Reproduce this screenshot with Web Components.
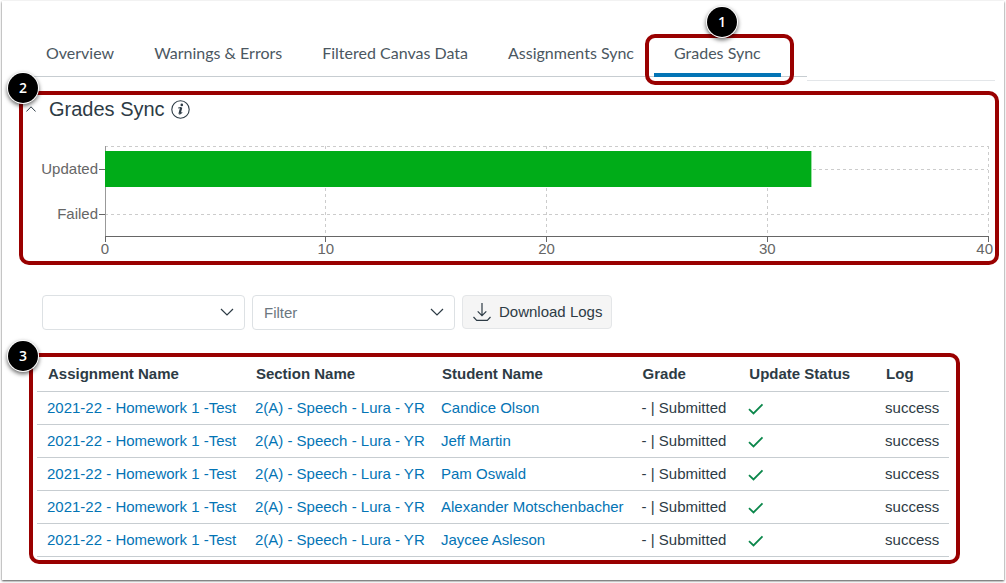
<!DOCTYPE html>
<html lang="en">
<head>
<meta charset="utf-8">
<title>Grades Sync</title>
<style>
  body {
    margin: 0;
    padding: 1px 2px 3px;
    background: #fff;
    color: #2d3b45;
    font: 15px/20px "Liberation Sans", Arial, sans-serif;
  }
</style>
</head>
<body>
<sync-page></sync-page>

<script>
class StepCallout extends HTMLElement {
  connectedCallback() {
    const shadowRoot = this.attachShadow({mode: 'open'});
    const css = `
    <style>
      :host {
        display: block;
        position: relative;
        box-sizing: border-box;
        border: 4px solid #900;
        border-radius: 10px;
      }
      .badge {
        position: absolute;
        left: var(--badge-x, -15px);
        top: var(--badge-y, -22px);
        width: 30px;
        height: 30px;
        border-radius: 50%;
        background: #000;
        color: #fff;
        font: 600 14px/30px "Open Sans", sans-serif;
        text-align: center;
        box-shadow: 0 0 0 1px #fff, 0 2px 4px 1px rgba(0, 0, 0, .6);
      }
      /* floating: the frame is drawn over its content and takes no space */
      :host([floating]) {
        border: 0;
      }
      .frame {
        display: none;
      }
      :host([floating]) .frame {
        display: block;
        position: absolute;
        inset: 2px -13px -8px -9px;
        border: 4px solid #900;
        border-radius: 10px;
        pointer-events: none;
      }
    </style>
    `;
    const html = `
    <slot></slot>
    <div class="frame"></div>
    <span class="badge">${this.getAttribute('number')}</span>
    `;
    shadowRoot.innerHTML = css + html;
  }
}
customElements.define('step-callout', StepCallout);


class TabItem extends HTMLElement {
  connectedCallback() {
    const shadowRoot = this.attachShadow({mode: 'open'});
    const current = this.hasAttribute('selected') ? 'aria-current="page"' : '';
    shadowRoot.innerHTML = `
    <style>
      :host {
        display: block;
      }
      button {
        display: block;
        height: 45px;
        padding: 0 20px;
        border: 0;
        border-bottom: 4px solid transparent;
        background: none;
        color: #4b5761;
        font: 16px/20px Lato, sans-serif;
        white-space: nowrap;
        cursor: pointer;
      }
      button[aria-current] {
        border-bottom-color: #0374b5;
      }
    </style>
    <button type="button" ${current}><slot></slot></button>
    `;
  }
}
customElements.define('tab-item', TabItem);


class TabBar extends HTMLElement {
  connectedCallback() {
    const shadowRoot = this.attachShadow({mode: 'open'});
    shadowRoot.innerHTML = `
    <style>
      :host {
        display: flex;
        align-items: flex-start;
      }
      nav {
        display: flex;
        padding-right: 26px;
        box-shadow: inset 0 -1px #c7cdd1;
      }
      .rest {
        flex: 1;
        height: 48px;
        border-bottom: 1px solid #e3e6e9;
      }
    </style>
    <nav><slot></slot></nav>
    <div class="rest"></div>
    `;
  }
}
customElements.define('tab-bar', TabBar);


class SectionHeading extends HTMLElement {
  connectedCallback() {
    const shadowRoot = this.attachShadow({mode: 'open'});
    shadowRoot.innerHTML = `
    <style>
      :host {
        display: flex;
        align-items: center;
        height: 28px;
      }
      button {
        display: flex;
        padding: 0;
        border: 0;
        background: none;
        color: inherit;
        cursor: pointer;
      }
      .toggle {
        margin: 0 13px 0 3px;
      }
      h2 {
        margin: 0 6px 0 0;
        font-size: 20px;
        font-weight: 400;
        line-height: 24px;
      }
    </style>
    <button class="toggle" type="button" aria-label="Collapse">
      <svg width="10" height="6" viewBox="0 0 10 6" fill="none" stroke="#2d3b45"><path d="M0.4 5.5 5 0.8 9.6 5.5"/></svg>
    </button>
    <h2><slot></slot></h2>
    <button type="button" aria-label="Information">
      <svg width="19" height="19" viewBox="0 0 19 19" fill="none" stroke="#2d3b45">
        <circle cx="9.500" cy="9.500" r="8.700" stroke-width="1.100"/>
        <circle cx="10.800" cy="4.900" r="1.300" fill="#2d3b45" stroke="none"/>
        <path d="M7.200 8 10.300 7.500" stroke-width="1.100"/>
        <path d="M10.200 7.500 8.600 13.500" stroke-width="2.200"/>
        <path d="M7.900 13.300Q8.300 15 11.200 12.400" stroke-width="1.100"/>
      </svg>
    </button>
    `;
  }
}
customElements.define('section-heading', SectionHeading);


class BarChart extends HTMLElement {
  connectedCallback() {
    const shadowRoot = this.attachShadow({mode: 'open'});
    const max = Number(this.getAttribute('max'));
    const rows = JSON.parse(this.getAttribute('rows'));
    const band = 45;
    const bottom = band * rows.length;

    let grid = '<line x2="100%" y1="0" y2="0"/>';
    let axis = '';
    for (let i = 0; i <= 4; i++) {
      const x = i * 25 + '%';
      const place = i == 4 ? 'text-anchor="end" dx="5"' : 'text-anchor="middle"';
      if (i > 0) grid += `<line x1="${x}" x2="${x}" y1="0" y2="${bottom}"/>`;
      axis += `<line x1="${x}" x2="${x}" y1="${bottom}" y2="${bottom + 6}"/>`;
      axis += `<text x="${x}" y="${bottom + 18}" ${place}>${max / 4 * i}</text>`;
    }
    let bars = '';
    rows.forEach(([name, value], i) => {
      const y = i * band + 23;
      grid += `<line x2="100%" y1="${y}" y2="${y}"/>`;
      axis += `<line x1="-6" x2="0" y1="${y}" y2="${y}"/>`;
      bars += `<rect y="${y - 18}" width="${value / max * 100}%" height="36"/>`;
    });

    shadowRoot.innerHTML = `
    <style>
      :host {
        display: flex;
        color: #666;
      }
      .names {
        width: 75px;
        margin-right: 7px;
        text-align: right;
      }
      .names div {
        line-height: ${band}px;
      }
      svg {
        flex: 1;
        min-width: 0;
        height: 115px;
        overflow: visible;
      }
      line {
        stroke: #666;
        shape-rendering: crispEdges;
      }
      .grid line {
        stroke: #ccc;
        stroke-dasharray: 3 3;
      }
      .y {
        stroke: #999;
      }
      rect {
        fill: #00ac18;
      }
      text {
        fill: #666;
      }
    </style>
    <div class="names">${rows.map(([name]) => `<div>${name}</div>`).join('')}</div>
    <svg>
      <g class="grid">${grid}</g>
      <line class="y" y2="${bottom}"/>
      <line x2="100%" y1="${bottom}" y2="${bottom}"/>
      ${axis}
      ${bars}
    </svg>
    `;
  }
}
customElements.define('bar-chart', BarChart);


class FilterSelect extends HTMLElement {
  connectedCallback() {
    const shadowRoot = this.attachShadow({mode: 'open'});
    shadowRoot.innerHTML = `
    <style>
      :host {
        display: block;
        position: relative;
        flex: 0 1 203px;
      }
      select {
        appearance: none;
        box-sizing: border-box;
        width: 100%;
        height: 35px;
        padding: 0 32px 0 11px;
        border: 1px solid #dde1e4;
        border-radius: 4px;
        background: #fff;
        color: #6b7780;
        font: inherit;
      }
      svg {
        position: absolute;
        right: 11px;
        top: 13px;
        pointer-events: none;
      }
    </style>
    <select aria-label="${this.getAttribute('label')}">
      <option>${this.getAttribute('value') || ''}</option>
    </select>
    <svg width="14" height="8" viewBox="0 0 14 8" fill="none" stroke="#2d3b45" stroke-width="1.200"><path d="M1 1 7 7 13 1"/></svg>
    `;
  }
}
customElements.define('filter-select', FilterSelect);


class DownloadButton extends HTMLElement {
  connectedCallback() {
    const shadowRoot = this.attachShadow({mode: 'open'});
    shadowRoot.innerHTML = `
    <style>
      :host {
        display: block;
      }
      button {
        display: flex;
        align-items: center;
        gap: 8px;
        height: 34px;
        padding: 0 9px 0 10px;
        border: 1px solid #e4e6e8;
        border-radius: 4px;
        background: #f5f5f5;
        color: #2d3b45;
        font: inherit;
        white-space: nowrap;
        cursor: pointer;
      }
    </style>
    <button type="button">
      <svg width="18" height="18" viewBox="0 0 18 18" fill="none" stroke="#2d3b45" stroke-width="1.200"><path d="M9 0V12.500M4.700 8.300 9 12.600 13.300 8.300M0.500 14 3.700 17.300H14.300L17.500 14"/></svg>
      <slot></slot>
    </button>
    `;
  }
}
customElements.define('download-button', DownloadButton);


class GradesTable extends HTMLElement {
  connectedCallback() {
    const shadowRoot = this.attachShadow({mode: 'open'});
    const students = ['Candice Olson', 'Jeff Martin', 'Pam Oswald', 'Alexander Motschenbacher', 'Jaycee Asleson'];
    const rows = students.map(student => `
      <tr>
        <td><a href="#">2021-22 - Homework 1 -Test</a></td>
        <td><a href="#">2(A) - Speech - Lura - YR</a></td>
        <td><a href="#">${student}</a></td>
        <td>- | Submitted</td>
        <td><svg width="16" height="12" viewBox="0 0 16 12" fill="none" stroke="#0b874b" stroke-width="1.800" role="img" aria-label="Updated"><path d="M1 6.200 5.500 10.500 14.500 1.300"/></svg></td>
        <td>success</td>
      </tr>`).join('');

    shadowRoot.innerHTML = `
    <style>
      :host {
        display: block;
      }
      table {
        width: 100%;
        table-layout: fixed;
        border-collapse: separate;
        border-spacing: 0;
      }
      th, td {
        box-sizing: border-box;
        height: 33px;
        padding: 0 0 0 10px;
        border-bottom: 1px solid #c7cdd1;
        text-align: left;
        white-space: nowrap;
      }
      th {
        height: 35px;
        padding-left: 11px;
      }
      th:nth-child(1) { width: 22.8%; }
      th:nth-child(2) { width: 20.4%; }
      th:nth-child(3) { width: 22%; }
      th:nth-child(4) { width: 11.7%; }
      th:nth-child(5) { width: 15%; }
      a {
        color: #0374b5;
        text-decoration: none;
      }
      svg {
        display: block;
        margin-top: 2px;
      }
    </style>
    <table>
      <thead>
        <tr>
          <th>Assignment Name</th>
          <th>Section Name</th>
          <th>Student Name</th>
          <th>Grade</th>
          <th>Update Status</th>
          <th>Log</th>
        </tr>
      </thead>
      <tbody>${rows}</tbody>
    </table>
    `;
  }
}
customElements.define('grades-table', GradesTable);


class SyncPage extends HTMLElement {
  connectedCallback() {
    const shadowRoot = this.attachShadow({mode: 'open'});
    shadowRoot.innerHTML = `
    <style>
      :host {
        display: block;
        box-sizing: border-box;
        min-height: calc(100vh - 4px);
        padding-top: 31px;
        background: #fff;
        box-shadow: 0 1px 2px rgba(0, 0, 0, .7);
      }
      tab-bar {
        margin: 0 9px 0 24px;
      }
      .tab-callout {
        --badge-x: 53px;
        --badge-y: -25px;
      }
      .chart {
        margin: 10px 5px 0 17px;
      }
      .chart bar-chart {
        margin: 23px 7px 0 0;
      }
      .filters {
        display: flex;
        gap: 7px;
        margin: 30px 40px 0;
      }
      .table {
        --badge-x: -25px;
        --badge-y: -16px;
        margin: 23px 44px 0 27px;
        padding: 0 7px 3px 4px;
      }
    </style>
    <tab-bar>
      <tab-item>Overview</tab-item>
      <tab-item>Warnings &amp; Errors</tab-item>
      <tab-item>Filtered Canvas Data</tab-item>
      <tab-item>Assignments Sync</tab-item>
      <step-callout class="tab-callout" number="1" floating>
        <tab-item selected>Grades Sync</tab-item>
      </step-callout>
    </tab-bar>
    <step-callout class="chart" number="2">
      <section-heading>Grades Sync</section-heading>
      <bar-chart max="40" rows='[["Updated", 32], ["Failed", 0]]'></bar-chart>
    </step-callout>
    <div class="filters">
      <filter-select label="Status"></filter-select>
      <filter-select label="Filter" value="Filter"></filter-select>
      <download-button>Download Logs</download-button>
    </div>
    <step-callout class="table" number="3">
      <grades-table></grades-table>
    </step-callout>
    `;
  }
}
customElements.define('sync-page', SyncPage);
</script>
</body>
</html>
